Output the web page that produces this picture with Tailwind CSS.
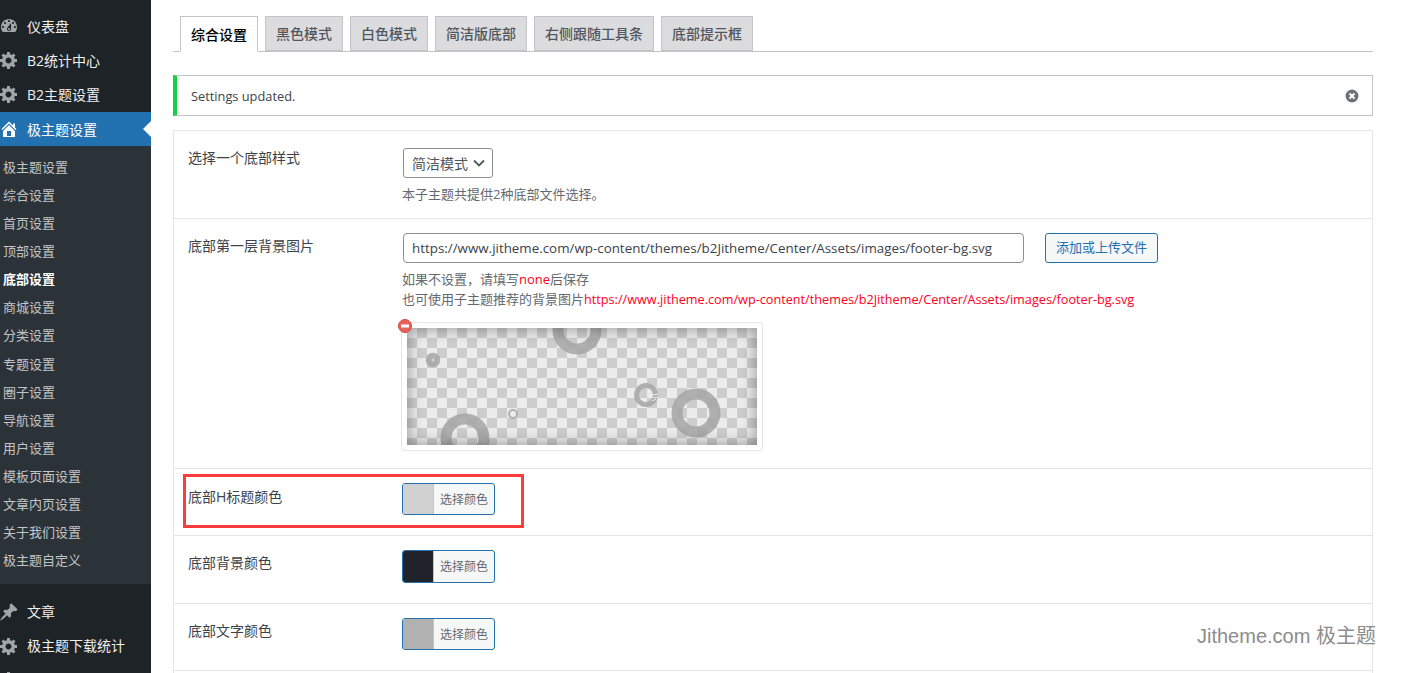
<!DOCTYPE html>
<html lang="zh-CN">
<head>
  <meta charset="UTF-8" />
  <title>极主题设置</title>
  <script src="https://cdn.jsdelivr.net/npm/@tailwindcss/browser@4"></script>
</head>
<body class="bg-white h-[673px] overflow-hidden font-['Open_Sans','Noto_Sans_CJK_SC',sans-serif] text-[13px] text-[#3c434a]">
  <svg class="hidden">
    <symbol id="gear" viewBox="0 0 20 20"><path d="M18 12h-2.18c-.17.7-.44 1.35-.81 1.93l1.54 1.54-2.1 2.1-1.54-1.54c-.58.36-1.23.63-1.91.79V19H8v-2.18c-.68-.16-1.33-.43-1.91-.79l-1.54 1.54-2.12-2.12 1.54-1.54c-.36-.58-.63-1.23-.79-1.91H1V9.03h2.17c.16-.7.44-1.35.8-1.94L2.43 5.55l2.1-2.1 1.54 1.54c.58-.37 1.24-.64 1.93-.81V2h3v2.18c.68.16 1.33.43 1.91.79l1.54-1.54 2.12 2.12-1.54 1.54c.36.59.64 1.24.8 1.94H18V12zm-8.5 1.5c1.66 0 3-1.34 3-3s-1.34-3-3-3-3 1.34-3 3 1.34 3 3 3z"/></symbol>
  </svg>

  <div class="flex h-[673px] overflow-hidden">
    <!-- sidebar -->
    <aside class="w-[151px] shrink-0 bg-[#1d2327] pt-[9px] overflow-hidden text-[14px] text-[#f0f0f1]">
      <a class="h-[34px] flex items-center gap-[8px]">
        <svg class="w-[20px] h-[20px] -ml-[1px] fill-[#a0a5aa]" viewBox="0 0 20 20"><path d="M3.76 16h12.48c1.1-1.37 1.76-3.11 1.76-5 0-4.42-3.58-8-8-8s-8 3.58-8 8c0 1.89.66 3.63 1.76 5zM10 4c.55 0 1 .45 1 1s-.45 1-1 1-1-.45-1-1 .45-1 1-1zM6 6c.55 0 1 .45 1 1s-.45 1-1 1-1-.45-1-1 .45-1 1-1zm8 0c.55 0 1 .45 1 1s-.45 1-1 1-1-.45-1-1 .45-1 1-1zm-5.37 5.55L12 7v6c0 1.1-.9 2-2 2s-2-.9-2-2c0-.57.24-1.08.63-1.45zM4 10c.55 0 1 .45 1 1s-.45 1-1 1-1-.45-1-1 .45-1 1-1zm12 0c.55 0 1 .45 1 1s-.45 1-1 1-1-.45-1-1 .45-1 1-1zm-5 3c0-.55-.45-1-1-1s-1 .45-1 1 .45 1 1 1 1-.45 1-1z"/></svg>
        <span>仪表盘</span>
      </a>
      <a class="h-[34px] flex items-center gap-[8px]">
        <svg class="w-[20px] h-[20px] -ml-[1px] fill-[#a0a5aa]"><use href="#gear"/></svg>
        <span>B2统计中心</span>
      </a>
      <a class="h-[34px] flex items-center gap-[8px]">
        <svg class="w-[20px] h-[20px] -ml-[1px] fill-[#a0a5aa]"><use href="#gear"/></svg>
        <span>B2主题设置</span>
      </a>
      <a class="relative mt-[1px] h-[34px] flex items-center gap-[8px] bg-[#2271b1] text-white">
        <svg class="w-[20px] h-[20px] -ml-[1px] fill-white" viewBox="0 0 20 20"><path d="M16 8.5l1.53 1.53-1.06 1.06L10 4.62l-6.47 6.47-1.06-1.06L10 2.5l4 4v-2h2v4zm-6-2.46l6 5.99V18H4v-5.97zM12 17v-5H8v5h4z"/></svg>
        <span>极主题设置</span>
        <span class="absolute right-0 top-[9px] border-y-[8px] border-r-[8px] border-y-transparent border-r-white"></span>
      </a>
      <ul class="bg-[#2c3338] pt-[7.4px] pb-[8.6px] text-[13px] text-[#c3c4c7]">
        <li class="h-[28.14px] flex items-center pl-[3px]">极主题设置</li>
        <li class="h-[28.14px] flex items-center pl-[3px]">综合设置</li>
        <li class="h-[28.14px] flex items-center pl-[3px]">首页设置</li>
        <li class="h-[28.14px] flex items-center pl-[3px]">顶部设置</li>
        <li class="h-[28.14px] flex items-center pl-[3px] font-bold text-white">底部设置</li>
        <li class="h-[28.14px] flex items-center pl-[3px]">商城设置</li>
        <li class="h-[28.14px] flex items-center pl-[3px]">分类设置</li>
        <li class="h-[28.14px] flex items-center pl-[3px]">专题设置</li>
        <li class="h-[28.14px] flex items-center pl-[3px]">圈子设置</li>
        <li class="h-[28.14px] flex items-center pl-[3px]">导航设置</li>
        <li class="h-[28.14px] flex items-center pl-[3px]">用户设置</li>
        <li class="h-[28.14px] flex items-center pl-[3px]">模板页面设置</li>
        <li class="h-[28.14px] flex items-center pl-[3px]">文章内页设置</li>
        <li class="h-[28.14px] flex items-center pl-[3px]">关于我们设置</li>
        <li class="h-[28.14px] flex items-center pl-[3px]">极主题自定义</li>
      </ul>
      <a class="mt-[11px] h-[34px] flex items-center gap-[8px]">
        <svg class="w-[20px] h-[20px] -ml-[1px] fill-[#a0a5aa]" viewBox="0 0 20 20"><path d="M10.44 3.02l1.82-1.82 6.36 6.35-1.83 1.82c-1.05-.68-2.48-.57-3.41.36l-.75.75c-.92.93-1.04 2.35-.35 3.41l-1.83 1.82-2.41-2.41-2.8 2.79c-.42.42-3.38 2.71-3.8 2.29s1.86-3.39 2.28-3.81l2.79-2.79L4.1 9.36l1.83-1.82c1.05.69 2.48.57 3.4-.36l.75-.75c.93-.92 1.05-2.35.36-3.41z"/></svg>
        <span>文章</span>
      </a>
      <a class="h-[34px] flex items-center gap-[8px]">
        <svg class="w-[20px] h-[20px] -ml-[1px] fill-[#a0a5aa]"><use href="#gear"/></svg>
        <span>极主题下载统计</span>
      </a>
      <a class="h-[34px] flex items-center gap-[8px]">
        <svg class="w-[20px] h-[20px] -ml-[1px] fill-[#a0a5aa]"><use href="#gear"/></svg>
      </a>
    </aside>

    <!-- main -->
    <main class="relative w-[1222px] pl-[22px] pt-[16px]">
      <nav class="flex h-[36px] border-b border-[#c3c4c7] pl-[7px] gap-[7px] text-[14px] font-medium text-[#50575e]">
        <a class="w-[78px] h-[36px] flex items-center justify-center border border-[#c3c4c7] border-b-white bg-white text-black">综合设置</a>
        <a class="w-[78px] h-[35px] flex items-center justify-center border border-[#c3c4c7] bg-[#dcdcde]">黑色模式</a>
        <a class="w-[78px] h-[35px] flex items-center justify-center border border-[#c3c4c7] bg-[#dcdcde]">白色模式</a>
        <a class="w-[92px] h-[35px] flex items-center justify-center border border-[#c3c4c7] bg-[#dcdcde]">简洁版底部</a>
        <a class="w-[120px] h-[35px] flex items-center justify-center border border-[#c3c4c7] bg-[#dcdcde]">右侧跟随工具条</a>
        <a class="w-[92px] h-[35px] flex items-center justify-center border border-[#c3c4c7] bg-[#dcdcde]">底部提示框</a>
      </nav>

      <div class="mt-[23px] h-[41px] w-[1200px] flex items-center justify-between border border-[#c3c4c7] border-l-[4px] border-l-[#0fd43f] pl-[14px] pr-[13px] text-[12.8px] font-medium">
        <span class="pt-[2px]">Settings updated.</span>
        <svg class="w-[14px] h-[14px]" viewBox="0 0 14 14"><circle cx="7" cy="7" r="6.5" fill="#6d7278"/><path d="M4.5 4.5l5 5m0-5l-5 5" stroke="#fff" stroke-width="2"/></svg>
      </div>

      <section class="mt-[14px] w-[1200px] border border-[#e5e5e5]">
        <!-- row: footer style -->
        <div class="h-[88px] flex border-b border-[#e5e5e5] pl-[14px] pt-[17px]">
          <label class="w-[215px] shrink-0 leading-[22px] text-[14px] -mt-[1px]">选择一个底部样式</label>
          <div>
            <div class="w-[90px] h-[30px] flex items-center gap-[5px] pl-[8px] border border-[#8c8f94] rounded-[3px] text-[14px] text-[#50575e]">
              <span>简洁模式</span>
              <svg class="w-[12px] h-[8px]" viewBox="0 0 12 8"><path d="M1 1.5l5 5 5-5" fill="none" stroke="#50575e" stroke-width="1.8"/></svg>
            </div>
            <p class="mt-[6px] -ml-[1px] leading-[20px] text-[#646970]">本子主题共提供2种底部文件选择。</p>
          </div>
        </div>

        <!-- row: background image -->
        <div class="h-[250px] flex border-b border-[#e5e5e5] pl-[14px] pt-[14px]">
          <label class="w-[215px] shrink-0 leading-[28px] text-[14px] -mt-[1px]">底部第一层背景图片</label>
          <div class="relative">
            <div class="flex gap-[21px]">
              <div class="w-[621px] h-[30px] flex items-center px-[8px] pt-[1px] border border-[#8c8f94] rounded-[4px] text-[13.37px] text-[#3c434a] whitespace-nowrap">https://www.jitheme.com/wp-content/themes/b2Jitheme/Center/Assets/images/footer-bg.svg</div>
              <button class="w-[113px] h-[30px] border border-[#2271b1] rounded-[3px] bg-[#f6f7f7] text-[#2271b1]">添加或上传文件</button>
            </div>
            <p class="mt-[6px] -ml-[1px] leading-[20px] text-[#646970]">如果不设置，请填写<span class="text-[#ff0022]">none</span>后保存</p>
            <p class="-ml-[1px] leading-[20px] text-[#646970] whitespace-nowrap">也可使用子主题推荐的背景图片<span class="text-[12.68px] text-[#ff0022]">https://www.jitheme.com/wp-content/themes/b2Jitheme/Center/Assets/images/footer-bg.svg</span></p>
            <div class="relative mt-[13px] -ml-[2px] w-[362px] h-[129px] border border-[#e5e5e5] rounded-[3px] p-[5px]">
              <div class="relative w-[350px] h-[117px]">
                <svg class="block" width="350" height="117" viewBox="0 0 350 117">
                  <defs>
                    <pattern id="check" width="20" height="20" patternUnits="userSpaceOnUse">
                      <rect width="20" height="20" fill="#cdcdcd"/>
                      <rect width="10" height="10" fill="#ececec"/>
                      <rect x="10" y="10" width="10" height="10" fill="#ececec"/>
                    </pattern>
                  </defs>
                  <rect width="350" height="117" fill="url(#check)"/>
                  <g fill="none" stroke="#a6a6a6" opacity="0.85">
                    <circle cx="170" cy="2" r="19" stroke-width="11"/>
                    <circle cx="26" cy="32" r="4.5" stroke-width="5.5"/>
                    <circle cx="289" cy="85" r="19" stroke-width="11"/>
                    <circle cx="239" cy="67" r="9.5" stroke-width="5"/>
                    <circle cx="106" cy="86" r="4" stroke-width="2"/>
                    <circle cx="58" cy="110" r="19" stroke-width="11"/>
                  </g>
                  <path d="M246 67l5 -1M246 70l5 -1M245 73l4 -2" stroke="#ececec" stroke-width="1" fill="none"/>
                </svg>
                <div class="absolute inset-0 shadow-[inset_0_0_16px_rgba(0,0,0,0.4)]"></div>
              </div>
              <svg class="absolute -left-[4px] -top-[4px] w-[14px] h-[14px]" viewBox="0 0 14 14"><circle cx="7" cy="7" r="6.5" fill="#e8605a" stroke="#d2483f"/><rect x="3" y="5.5" width="8" height="3" fill="#fff"/></svg>
            </div>
          </div>
        </div>

        <!-- row: heading colour -->
        <div class="h-[67px] flex border-b border-[#e5e5e5] pl-[14px] pt-[14px]">
          <label class="w-[214px] shrink-0 leading-[28px] text-[14px]">底部H标题颜色</label>
          <button class="w-[93px] h-[32px] flex border border-[#2271b1] rounded-[3px] overflow-hidden bg-[#f6f7f7] text-[12px] text-[#646970]">
            <span class="w-[31px] h-full bg-[#d1d1d1] border-r border-[#c3c4c7]"></span>
            <span class="flex-1 self-center text-center pt-[1px]">选择颜色</span>
          </button>
        </div>
        <!-- row: background colour -->
        <div class="h-[68px] flex border-b border-[#e5e5e5] pl-[14px] pt-[14px]">
          <label class="w-[214px] shrink-0 leading-[28px] text-[14px] -mt-[1px]">底部背景颜色</label>
          <button class="w-[93px] h-[33px] flex border border-[#2271b1] rounded-[3px] overflow-hidden bg-[#f6f7f7] text-[12px] text-[#646970]">
            <span class="w-[31px] h-full bg-[#202329] border-r border-[#c3c4c7]"></span>
            <span class="flex-1 self-center text-center pt-[1px]">选择颜色</span>
          </button>
        </div>
        <!-- row: text colour -->
        <div class="h-[67px] flex border-b border-[#e5e5e5] pl-[14px] pt-[14px]">
          <label class="w-[214px] shrink-0 leading-[28px] text-[14px] -mt-[1px]">底部文字颜色</label>
          <button class="w-[93px] h-[32px] flex border border-[#2271b1] rounded-[3px] overflow-hidden bg-[#f6f7f7] text-[12px] text-[#646970]">
            <span class="w-[31px] h-full bg-[#b1b1b1] border-r border-[#c3c4c7]"></span>
            <span class="flex-1 self-center text-center pt-[1px]">选择颜色</span>
          </button>
        </div>
        <div class="h-[40px]"></div>
      </section>

      <!-- highlight box and watermark sit over the content -->
      <div class="absolute left-[32px] top-[474px] w-[341px] h-[54px] border-[3px] border-[#ff3b3b]"></div>
      <div class="absolute left-[1046px] top-[624px] font-['Liberation_Sans','Noto_Sans_CJK_SC',sans-serif] text-[20px] leading-[24px] text-[#8c8c8c] whitespace-nowrap">Jitheme.com 极主题</div>
    </main>
  </div>
</body>
</html>
